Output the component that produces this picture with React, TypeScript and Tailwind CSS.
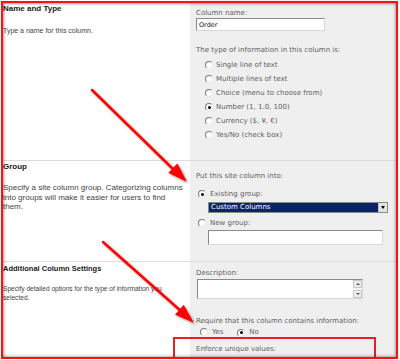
import React from "react";

function Radio({ checked = false }: { checked?: boolean }) {
  return (
    <span className="relative inline-flex h-[8px] w-[8px] shrink-0 items-center justify-center rounded-full border border-t-[#7a7a7a] border-l-[#7a7a7a] border-r-[#e8e8e8] border-b-[#e8e8e8] bg-white">
      {checked && <span className="h-[3px] w-[3px] rounded-full bg-black" />}
    </span>
  );
}

function RadioRow({ label, checked = false }: { label: string; checked?: boolean }) {
  return (
    <div className="flex h-[14px] items-center gap-[3px] pl-[9px]">
      <Radio checked={checked} />
      <span>{label}</span>
    </div>
  );
}

const leftFont = { fontFamily: '"Liberation Sans", Arial, sans-serif' } as React.CSSProperties;
const rightFont = { fontFamily: '"DejaVu Sans", Verdana, sans-serif' } as React.CSSProperties;

export default function App() {
  return (
    <div className="relative h-[360px] w-[400px] overflow-hidden bg-white">
      <div className="flex h-full flex-col pl-[3px] pr-[4px]">
        {/* Section 1 */}
        <div className="flex h-[161px] border-b border-[#dcdcdc]">
          <div className="w-[187px] bg-white" style={leftFont}>
            <div className="pt-[4px] text-[8px] font-bold leading-[10px] text-[#1a1a1a]">Name and Type</div>
            <div className="mt-[12px] text-[7px] leading-[10px] text-[#444]">Type a name for this column.</div>
          </div>
          <div className="flex-1 bg-[#efefef] pl-[6px] pt-[8px] text-[7px] leading-[10px] text-[#606060]" style={rightFont}>
            <div>Column name:</div>
            <div className="flex h-[13px] w-[129px] items-center border border-t-[#8a8a8a] border-l-[#8a8a8a] border-r-[#d8d8d8] border-b-[#d8d8d8] bg-white pl-[2px] text-[6.5px] text-[#111]">
              Order
            </div>
            <div className="mt-[14px]">The type of information in this column is:</div>
            <div className="mt-[3px]">
              <RadioRow label="Single line of text" />
              <RadioRow label="Multiple lines of text" />
              <RadioRow label="Choice (menu to choose from)" />
              <RadioRow label="Number (1, 1.0, 100)" checked />
              <RadioRow label="Currency ($, ¥, €)" />
              <RadioRow label="Yes/No (check box)" />
            </div>
          </div>
        </div>

        {/* Section 2 */}
        <div className="flex h-[101px] border-b border-[#dcdcdc]">
          <div className="w-[187px] bg-white" style={leftFont}>
            <div className="pt-[1px] text-[8px] font-bold leading-[10px] text-[#1a1a1a]">Group</div>
            <div className="mt-[11px] text-[8px] leading-[9.7px] text-[#444]">
              Specify a site column group. Categorizing columns
              <br />
              into groups will make it easier for users to find
              <br />
              them.
            </div>
          </div>
          <div className="flex-1 bg-[#efefef] pl-[6px] pt-[10px] text-[7px] leading-[10px] text-[#606060]" style={rightFont}>
            <div>Put this site column into:</div>
            <div className="mt-[8px] flex h-[10px] items-center gap-[4px] pl-[2px]">
              <Radio checked />
              <span>Existing group:</span>
            </div>
            <div className="ml-[12px] mt-[3px] flex h-[11px] w-[180px] border border-[#8a8a8a] bg-white">
              <div className="flex flex-1 items-center bg-[#0a246a] pl-[2px] text-[7px] leading-[9px] text-white">
                Custom Columns
              </div>
              <div className="flex w-[9px] items-center justify-center border-l border-[#c0c0c0] bg-[#e4e4e4]">
                <span className="h-0 w-0 border-l-[2.5px] border-r-[2.5px] border-t-[3px] border-l-transparent border-r-transparent border-t-black" />
              </div>
            </div>
            <div className="mt-[5px] flex h-[10px] items-center gap-[4px] pl-[2px]">
              <Radio />
              <span>New group:</span>
            </div>
            <div className="ml-[12px] mt-[2px] h-[15px] w-[175px] border border-t-[#8a8a8a] border-l-[#8a8a8a] border-r-[#d8d8d8] border-b-[#d8d8d8] bg-white" />
          </div>
        </div>

        {/* Section 3 */}
        <div className="flex flex-1">
          <div className="w-[187px] bg-white" style={leftFont}>
            <div className="pt-[2px] text-[7.5px] font-bold leading-[10px] text-[#1a1a1a]">Additional Column Settings</div>
            <div className="mt-[10px] text-[6.6px] leading-[9px] text-[#444]">
              Specify detailed options for the type of information you
              <br />
              selected.
            </div>
          </div>
          <div className="flex-1 bg-[#efefef] pl-[6px] pt-[6px] text-[7px] leading-[10px] text-[#606060]" style={rightFont}>
            <div>Description:</div>
            <div className="ml-[1px] mt-[1px] flex h-[20px] w-[166px] border border-t-[#8a8a8a] border-l-[#8a8a8a] border-r-[#d8d8d8] border-b-[#d8d8d8] bg-white">
              <div className="flex-1" />
              <div className="flex w-[9px] flex-col justify-between bg-[#f4f4f4]">
                <div className="flex h-[8px] items-center justify-center border border-[#c8c8c8] bg-[#ececec]">
                  <span className="h-0 w-0 border-b-[2px] border-l-[2px] border-r-[2px] border-b-[#555] border-l-transparent border-r-transparent" />
                </div>
                <div className="flex h-[8px] items-center justify-center border border-[#c8c8c8] bg-[#ececec]">
                  <span className="h-0 w-0 border-l-[2px] border-r-[2px] border-t-[2px] border-l-transparent border-r-transparent border-t-[#555]" />
                </div>
              </div>
            </div>
            <div className="mt-[17px]">Require that this column contains information:</div>
            <div className="mt-[1px] flex h-[10px] items-center pl-[4px]">
              <Radio />
              <span className="ml-[4px]">Yes</span>
              <span className="ml-[14px]"><Radio checked /></span>
              <span className="ml-[4px]">No</span>
            </div>
            <div className="mt-[7px]">Enforce unique values:</div>
          </div>
        </div>
      </div>

      {/* annotation: red rectangle */}
      <div className="pointer-events-none absolute left-[173px] top-[337px] h-[22px] w-[203px] border-2 border-[#e52222]" />

      {/* annotation: outer frame */}
      <div className="pointer-events-none absolute left-[1px] top-[1px] h-[358px] w-[397px] border-2 border-[#ff1010] shadow-[inset_1px_1px_3px_rgba(0,0,0,0.35),inset_-1px_-1px_3px_rgba(0,0,0,0.25)]" />

      {/* annotation: arrows */}
      <svg className="pointer-events-none absolute left-0 top-0" width="400" height="360" viewBox="0 0 400 360">
        <defs>
          <filter id="sh" x="-10%" y="-10%" width="130%" height="130%">
            <feDropShadow dx="1.5" dy="1.5" stdDeviation="1" floodColor="#000" floodOpacity="0.4" />
          </filter>
        </defs>
        <g filter="url(#sh)" fill="#ff0000" stroke="#ff0000">
          <line x1="92" y1="90" x2="175" y2="171" strokeWidth="2.5" strokeLinecap="round" />
          <polygon points="186,181 168.9,172.7 177.3,164.1" strokeWidth="1" />
          <line x1="103" y1="242" x2="182" y2="312" strokeWidth="2.5" strokeLinecap="round" />
          <polygon points="193,322 175.6,314.5 183.6,305.5" strokeWidth="1" />
        </g>
      </svg>
    </div>
  );
}
